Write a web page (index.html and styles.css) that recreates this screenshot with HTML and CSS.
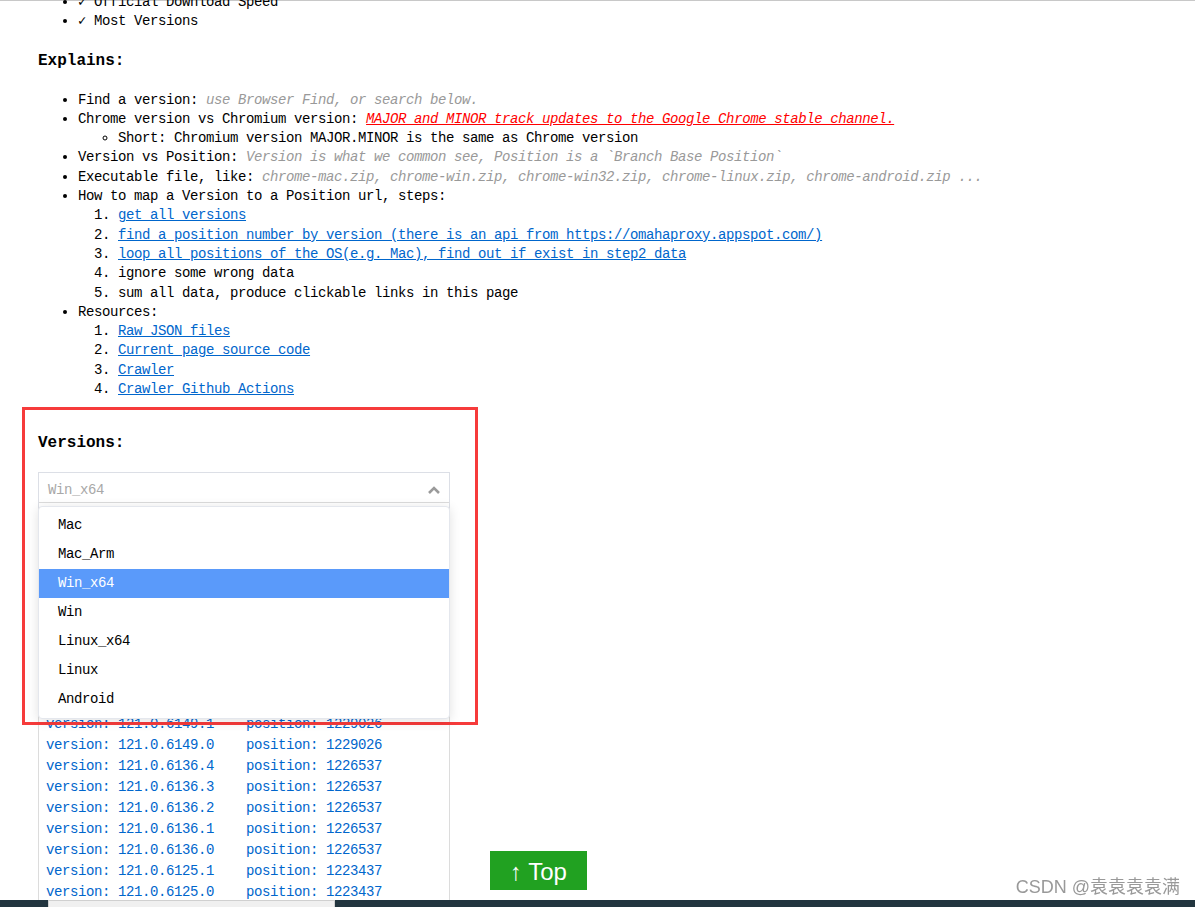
FILE: index.html
```html
<!DOCTYPE html>
<html lang="en">
<head>
    <meta charset="utf-8">
    <title>Chromium History Versions</title>
    <link rel="stylesheet" href="styles.css">
</head>
<body>
    <div class="top-line"></div>

    <main class="page">
        <!-- 特性列表（已滚动） -->
        <ul class="features">
            <li>✓ Official Download Speed</li>
            <li>✓ Most Versions</li>
        </ul>

        <h3>Explains:</h3>
        <ul class="explains">
            <li>Find a version: <i class="hint">use Browser Find, or search below.</i></li>
            <li>Chrome version vs Chromium version: <a class="warn" href="#">MAJOR and MINOR track updates to the Google Chrome stable channel.</a>
                <ul>
                    <li>Short: Chromium version MAJOR.MINOR is the same as Chrome version</li>
                </ul>
            </li>
            <li>Version vs Position: <i class="hint">Version is what we common see, Position is a `Branch Base Position`</i></li>
            <li>Executable file, like: <i class="hint">chrome-mac.zip, chrome-win.zip, chrome-win32.zip, chrome-linux.zip, chrome-android.zip ...</i></li>
            <li>How to map a Version to a Position url, steps:
                <ol>
                    <li><a href="#">get all versions</a></li>
                    <li><a href="#">find a position number by version (there is an api from https://omahaproxy.appspot.com/)</a></li>
                    <li><a href="#">loop all positions of the OS(e.g. Mac), find out if exist in step2 data</a></li>
                    <li>ignore some wrong data</li>
                    <li>sum all data, produce clickable links in this page</li>
                </ol>
            </li>
            <li>Resources:
                <ol>
                    <li><a href="#">Raw JSON files</a></li>
                    <li><a href="#">Current page source code</a></li>
                    <li><a href="#">Crawler</a></li>
                    <li><a href="#">Crawler Github Actions</a></li>
                </ol>
            </li>
        </ul>

        <section class="versions">
            <div class="mark-box"></div>
            <h3>Versions:</h3>

            <div class="select">
                <div class="select-input">
                    <span class="placeholder">Win_x64</span>
                    <svg class="chevron" width="14" height="10" viewBox="0 0 14 10">
                        <polyline points="2,8 7,3 12,8" fill="none" stroke="#9a9a9a" stroke-width="2.6"/>
                    </svg>
                </div>
                <ul class="dropdown">
                    <li>Mac</li>
                    <li>Mac_Arm</li>
                    <li class="active">Win_x64</li>
                    <li>Win</li>
                    <li>Linux_x64</li>
                    <li>Linux</li>
                    <li>Android</li>
                </ul>
            </div>

            <!-- 前面几行被下拉框挡住，这里只留可见部分 -->
            <div class="version-list">
                <a href="#">version: 121.0.6149.1    position: 1229026</a>
                <a href="#">version: 121.0.6149.0    position: 1229026</a>
                <a href="#">version: 121.0.6136.4    position: 1226537</a>
                <a href="#">version: 121.0.6136.3    position: 1226537</a>
                <a href="#">version: 121.0.6136.2    position: 1226537</a>
                <a href="#">version: 121.0.6136.1    position: 1226537</a>
                <a href="#">version: 121.0.6136.0    position: 1226537</a>
                <a href="#">version: 121.0.6125.1    position: 1223437</a>
                <a href="#">version: 121.0.6125.0    position: 1223437</a>
            </div>
        </section>
    </main>

    <a class="to-top" href="#">↑ Top</a>
    <div class="watermark">CSDN @袁袁袁袁满</div>

    <div class="bottom-bar"><span class="thumb"></span></div>
</body>
</html>
```

FILE: styles.css
```css
/* 基础 */
html, body {
    margin: 0;
    height: 907px;
    overflow: hidden;
    background: #fff;
}

body {
    font-family: "Liberation Mono", "DejaVu Sans Mono", monospace;
    font-size: 14px;
    letter-spacing: -0.4px;
    line-height: 19.3px;
    color: #000;
}

.top-line {
    height: 1px;
    background: #c8c8c8;
}

.page {
    padding-left: 38px;
}

ul, ol {
    margin: 0;
    padding-left: 40px;
}

.features {
    margin-top: -8px;
}

h3 {
    margin: 19px 0 20px;
    font-size: 16px;
    line-height: 20px;
    letter-spacing: 0;
    font-weight: bold;
}

a {
    color: #0066cc;
}

.hint {
    color: #999;
}

.warn {
    color: #f00;
    font-style: italic;
}

.explains ul {
    list-style: circle;
}

/* 版本选择 */
.versions {
    position: relative;
    padding-top: 15px;
    width: 412px;
}

.versions h3 {
    margin-bottom: 19px;
}

.mark-box {
    position: absolute;
    left: -16px;
    top: 8px;
    width: 450px;
    height: 312px;
    border: 3px solid #f63b3b;
    pointer-events: none;
}

.select {
    position: relative;
    z-index: 2;
}

.select-input {
    height: 34px;
    border: 1px solid #dcdfe6;
    display: flex;
    align-items: center;
    justify-content: space-between;
    padding: 0 8px 0 9px;
}

.placeholder {
    color: #a8a8a8;
}

.chevron {
    display: block;
}

.dropdown {
    position: absolute;
    top: 34px;
    left: 0;
    right: 0;
    list-style: none;
    padding: 4px 0;
    background: #fff;
    border: 1px solid #e4e7ed;
    border-radius: 4px;
    box-shadow: 0 2px 12px rgba(0,0,0,0.12);
}

.dropdown li {
    height: 29px;
    line-height: 29px;
    padding-left: 19px;
}

.dropdown li.active {
    background: #5a9afa;
    color: #fff;
}

.version-list {
    margin-top: -6px;
    border: 1px solid #dcdcdc;
    border-bottom: 0;
    padding: 211px 0 0 7px;
    height: 188px;
}

.version-list a {
    display: block;
    line-height: 21px;
    white-space: pre;
    text-decoration: none;
}

/* 浮动元素 */
.to-top {
    position: fixed;
    left: 490px;
    top: 851px;
    width: 97px;
    height: 39px;
    background: #21a121;
    color: #fff;
    text-decoration: none;
    font-family: "Liberation Sans", Arial, sans-serif;
    font-size: 24px;
    letter-spacing: 0;
    line-height: 41px;
    text-align: center;
}

.watermark {
    position: fixed;
    right: 15px;
    top: 876px;
    color: #999;
    font-family: "Liberation Sans", "Noto Sans CJK SC", sans-serif;
    font-size: 18px;
    letter-spacing: 0;
    line-height: 22px;
}

.bottom-bar {
    position: fixed;
    left: 0;
    right: 0;
    bottom: 0;
    height: 7px;
    background: #22353f;
}

.bottom-bar .thumb {
    position: absolute;
    left: 48px;
    top: 0;
    width: 287px;
    height: 7px;
    background: #f0f0f0;
    border: 1px solid #d0d0d0;
    border-bottom: 0;
    box-sizing: border-box;
}
```
